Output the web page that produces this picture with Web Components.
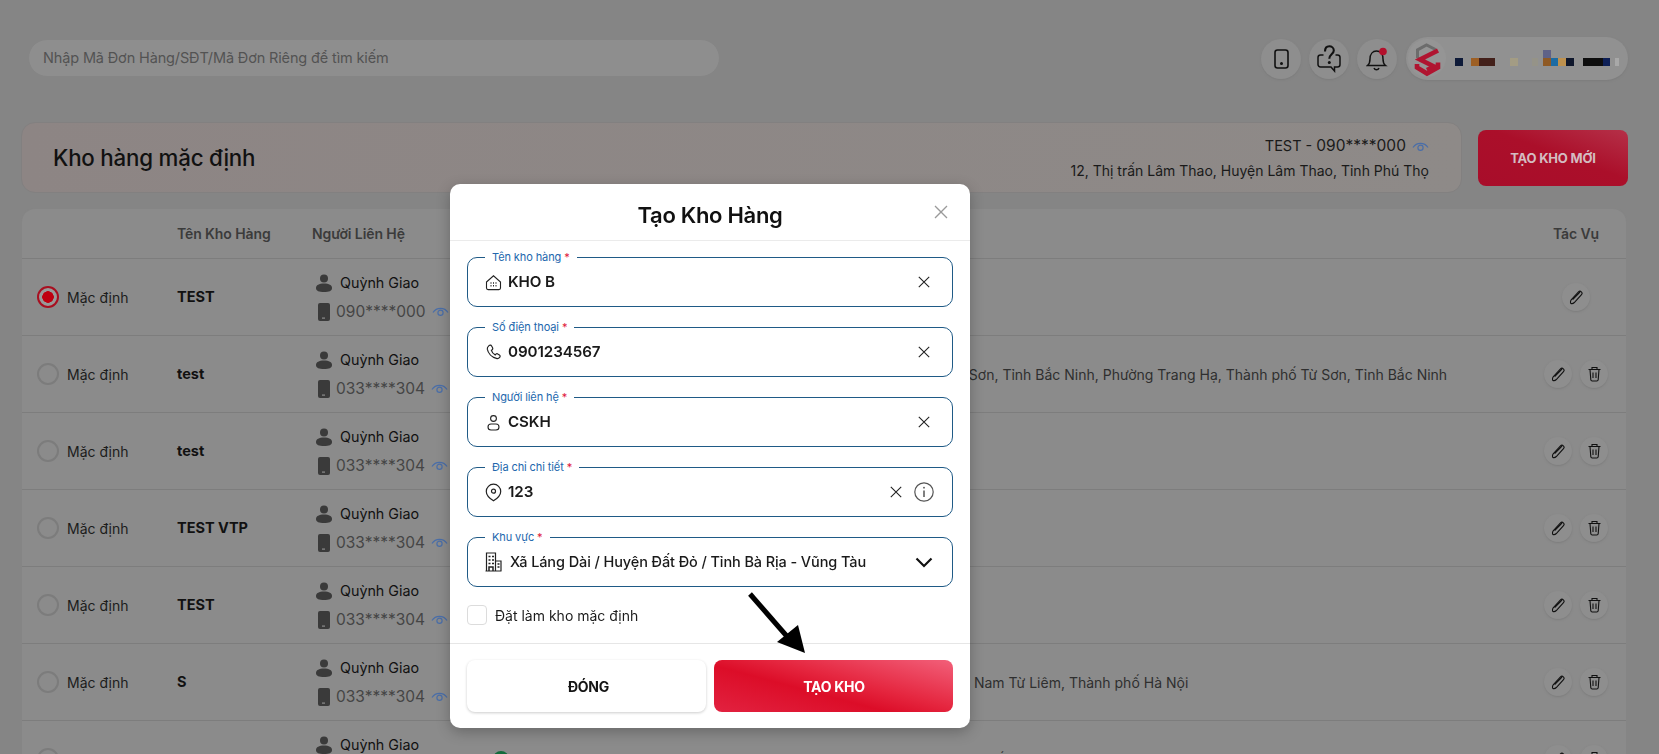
<!DOCTYPE html>
<html lang="vi">
<head>
<meta charset="utf-8">
<title>Tạo Kho Hàng</title>
<style>
  html, body { margin: 0; height: 754px; overflow: hidden; background: #858585; }
  body { font-family: Inter, "Noto Sans", sans-serif; color: #111; }
</style>
</head>
<body>
<kho-page>
  <top-bar></top-bar>
  <default-card></default-card>
  <kho-table>
    <kho-row active name="TEST" phone="090****000" address="12, Thị trấn Lâm Thao, Huyện Lâm Thao, Tỉnh Phú Thọ" single></kho-row>
    <kho-row name="test" phone="033****304" address="Phường Trang Hạ, Thành phố Từ Sơn, Tỉnh Bắc Ninh, Thành phố, Từ Sơn, Tỉnh Bắc Ninh, Phường Trang Hạ, Thành phố Từ Sơn, Tỉnh Bắc Ninh"></kho-row>
    <kho-row name="test" phone="033****304" address="Phường Trang Hạ, Thành phố Từ Sơn"></kho-row>
    <kho-row name="TEST VTP" phone="033****304" address="Phường Cầu Diễn, Quận Nam Từ Liêm"></kho-row>
    <kho-row name="TEST" phone="033****304" address="Phường Cầu Diễn, Quận Nam Từ Liêm"></kho-row>
    <kho-row name="S" phone="033****304" address="Số 1120, Ngõ 168, Đường Cầu Diễn, Phường Phúc Diễn, Hà Nội, Quận Nam Từ Liêm, Thành phố Hà Nội"></kho-row>
    <kho-row name="test" phone="033****304" address="33 Định Công, Bình Dân, Phường Định Công, Quận Hoàng Mai, Thành phố Hà Nội"></kho-row>
  </kho-table>
</kho-page>

<kho-modal>
  <form-field label="Tên kho hàng" value="KHO B" icon="home"></form-field>
  <form-field label="Số điện thoại" value="0901234567" icon="phone"></form-field>
  <form-field label="Người liên hệ" value="CSKH" icon="user"></form-field>
  <form-field label="Địa chỉ chi tiết" value="123" icon="pin" info></form-field>
  <form-field label="Khu vực" value="Xã Láng Dài / Huyện Đất Đỏ / Tỉnh Bà Rịa - Vũng Tàu" icon="building" select></form-field>
</kho-modal>

<script>
// icons used in more than one element
const ICONS = {
  home: `<svg width="17" height="17" viewBox="0 0 17 17" fill="none" stroke="#222" stroke-width="1.1"><path d="M1.5 8 8.5 1.8 15.5 8v6a1.6 1.6 0 0 1-1.6 1.6H3.1A1.6 1.6 0 0 1 1.5 14z"/><path d="M5.5 9h1M8 9h1M10.5 9h1M5.5 11.7h1M8 11.7h1M10.5 11.7h1" stroke-width="1.4"/></svg>`,
  phone: `<svg width="17" height="17" viewBox="0 0 17 17" fill="none" stroke="#222" stroke-width="1.2"><path d="M4 1.6c1-.7 2-.5 2.6.4l1 1.8c.4.7.2 1.4-.4 1.9l-.8.6c.6 2 1.9 3.6 3.8 4.6l.7-.7c.5-.5 1.3-.7 1.9-.3l1.6 1c.8.5 1 1.5.3 2.4-.8 1-2 1.5-3.3 1.1C6.600 13.200 3.100 9.200 2.300 5.200 2.100 3.900 3 2.400 4 1.600z"/></svg>`,
  user: `<svg width="17" height="17" viewBox="0 0 17 17" fill="none" stroke="#222" stroke-width="1.1"><circle cx="8.500" cy="4.500" r="2.900"/><rect x="3" y="10" width="11" height="6" rx="3"/></svg>`,
  pin: `<svg width="17" height="19" viewBox="0 0 17 19" fill="none" stroke="#222" stroke-width="1.2"><path d="M8.500 1.200a7.200 7.200 0 0 1 7.200 7.200c0 4-4.200 7.500-7.200 9.400-3-1.900-7.200-5.400-7.200-9.400a7.200 7.200 0 0 1 7.200-7.200z"/><circle cx="8.500" cy="8.200" r="2"/></svg>`,
  building: `<svg width="17" height="20" viewBox="0 0 17 20" fill="none" stroke="#222" stroke-width="1.200"><path d="M1.500 19V1h9v18M10.500 9h5.500v10M.5 19h16"/><path d="M3.500 4.500h2M7 4.500h2M3.500 8h2M7 8h2M3.500 11.500h2M7 11.500h2M12.500 12h2M12.500 15h2M4 19v-4h4v4" stroke-width="1.500"/></svg>`,
  x: `<svg width="12" height="12" viewBox="0 0 12 12" fill="none" stroke="#222" stroke-width="1.100"><path d="M.8.800l10.400 10.400M11.200.800.800 11.200"/></svg>`,
  eye: `<svg width="17" height="11" viewBox="0 0 17 11" fill="none" stroke="#4a6ea8" stroke-width="1.200"><path d="M1 6.500C4.500 1 12.500 1 16 6.500"/><circle cx="8.500" cy="6.800" r="2.600"/></svg>`,
  pen: `<svg width="15" height="15" viewBox="0 0 15 15" fill="none" stroke="#111" stroke-width="1.100"><path d="M1.800 13.400c-.5-1.200-.3-2.600.4-3.600L9.500 1.900c.8-.8 2-.8 2.800-.1.900.8 1 2 .2 2.900L5.300 12.500c-1 1-2.300 1.300-3.500.9z"/><path d="M3.600 9.500 11 2"/></svg>`,
  trash: `<svg width="15" height="16" viewBox="0 0 15 16" fill="none" stroke="#111" stroke-width="1.100"><path d="M1.500 3.500h12M5 3.500V1.500h5v2M3 3.500l.8 10.200c.1.800.6 1.300 1.400 1.300h4.600c.8 0 1.300-.5 1.400-1.300L12 3.500M6 6.500v5.500M9 6.500v5.500"/></svg>`
};

class KhoPage extends HTMLElement {
  constructor() {
    super();
    this.attachShadow({ mode: "open" }).innerHTML = `
      <style>
        :host { display: flex; flex-direction: column; height: 754px; padding: 37px 31px 0 21px; box-sizing: border-box; overflow: hidden; }
      </style>
      <slot></slot>`;
  }
}

class TopBar extends HTMLElement {
  constructor() {
    super();
    this.attachShadow({ mode: "open" }).innerHTML = `
      <style>
        :host { display: flex; align-items: center; height: 43px; flex: none; margin-bottom: 42px; padding-left: 7px; }
        .search { width: 692px; height: 38px; margin-top: -2px; box-sizing: border-box; padding-left: 14px; display: flex; align-items: center;
          background: #8e8e8e; border: 1px solid #858585; border-radius: 19px; font-size: 14.500px; color: #535353; letter-spacing: -.14px; }
        .right { margin-left: auto; display: flex; align-items: center; }
        .circle { width: 40px; height: 40px; border-radius: 50%; background: #8e8e8e; box-shadow: 0 1px 2px #7c7c7c; display: flex; align-items: center; justify-content: center; margin-right: 8px; }
        .pill { width: 222px; height: 43px; margin-left: 1px; border-radius: 22px; background: #919191; box-shadow: 0 1px 2px #7c7c7c; display: flex; align-items: center; }
        .pill svg { display: block; }
      </style>
      <div class="search">Nhập Mã Đơn Hàng/SĐT/Mã Đơn Riêng để tìm kiếm</div>
      <div class="right">
        <div class="circle"><svg width="15" height="20" viewBox="0 0 15 20" fill="none" stroke="#111" stroke-width="1.600"><rect x="1" y="1" width="13" height="18" rx="2.500"/><circle cx="7.500" cy="14.500" r=".7" fill="#111"/></svg></div>
        <div class="circle"><svg width="24" height="28" viewBox="0 0 24 28" fill="none" stroke="#111" stroke-width="1.500"><path d="M6.500 10H3.500A2.500 2.500 0 0 0 1 12.500v7A2.500 2.500 0 0 0 3.500 22H14l3.500 4v-4h3A2.500 2.500 0 0 0 23 19.500v-7A2.500 2.500 0 0 0 20.500 10h-2"/><path d="M8 6.500C8 3 10 1.200 12.300 1.200S16.800 3 16.800 5.500c0 3.500-4.500 3.500-4.500 8.300" stroke-width="2.100"/><circle cx="12.300" cy="17.500" r="1.500" fill="#111" stroke="none"/></svg></div>
        <div class="circle"><svg width="22" height="24" viewBox="0 0 22 24" fill="none" stroke="#111" stroke-width="1.500"><path d="M1.500 18.500c2-1.500 2.500-3 2.500-6.500 0-5 2.800-8 6.500-8 3.800 0 6.500 3 6.500 8 0 3.500.500 5 2.500 6.500z"/><path d="M8 21c.5 1.200 1.300 1.800 2.500 1.800S12.500 22.200 13 21"/><circle cx="17" cy="4.500" r="3.800" fill="#b3102c" stroke="none"/></svg></div>
        <div class="pill">
          <svg width="222" height="43" viewBox="0 0 222 43">
            <circle cx="21" cy="21" r="19" fill="#959595"/>
            <path d="M11.500 21v-8l9-5 9 4.500" fill="none" stroke="#6c6c6c" stroke-width="3"/>
            <path d="M32 13.500 14 22.500 28 29.500 21 33M11 27v3.500l10 6 11-6v-5" fill="none" stroke="#b01430" stroke-width="4.600"/>
            <rect x="49" y="21" width="8" height="8" fill="#0e1a38"/>
            <rect x="65" y="21" width="8" height="8" fill="#9d5f24"/><rect x="73" y="21" width="16" height="8" fill="#43201a"/>
            <rect x="104" y="21" width="8" height="8" fill="#a39c84"/><rect x="126" y="21" width="6" height="8" fill="#959388"/>
            <rect x="137" y="13" width="8" height="8" fill="#5f6288"/><rect x="137" y="21" width="8" height="8" fill="#8f5a25"/>
            <rect x="145" y="21" width="7" height="8" fill="#1c6ba3"/><rect x="152" y="21" width="8" height="8" fill="#bd914f"/>
            <rect x="160" y="21" width="8" height="8" fill="#0f172c"/><rect x="177" y="21" width="20" height="8" fill="#0e0e0e"/>
            <rect x="197" y="21" width="7" height="8" fill="#0d1f56"/><rect x="209" y="21" width="4" height="8" fill="#a8a8a8"/>
          </svg>
        </div>
      </div>`;
  }
}

class DefaultCard extends HTMLElement {
  constructor() {
    super();
    this.attachShadow({ mode: "open" }).innerHTML = `
      <style>
        :host { display: flex; flex: none; align-items: center; gap: 16px; margin-bottom: 15px; }
        .card { flex: 1; height: 71px; box-sizing: border-box; display: flex; align-items: center; justify-content: space-between;
          padding: 0 32px 0 31px; border-radius: 14px; border: 1px solid #828080; background: linear-gradient(90deg, #8d8584, #8e8a88); }
        h2 { margin: 0; font-size: 22.300px; font-weight: 500; color: #111; letter-spacing: -.2px; }
        .info { text-align: right; font-size: 14px; color: #1a1a1a; line-height: 25px; padding-top: 1px; }
        .info svg { margin-left: 2px; vertical-align: -1px; }
        .top { font-size: 14.500px; }
        .phone { font-size: 15.500px; }
        button { width: 150px; height: 56px; border: 0; border-radius: 8px; font: 700 13px Inter, sans-serif; letter-spacing: -.2px; color: #d4bcc1;
          background: linear-gradient(200deg, #b53048 0%, #ab0f2a 45%, #a80d2a 100%); }
      </style>
      <div class="card">
        <h2>Kho hàng mặc định</h2>
        <div class="info">
          <div class="top">TEST - <span class="phone">090****000</span> ${ICONS.eye}</div>
          <div>12, Thị trấn Lâm Thao, Huyện Lâm Thao, Tỉnh Phú Thọ</div>
        </div>
      </div>
      <button>TẠO KHO MỚI</button>`;
  }
}

class KhoTable extends HTMLElement {
  constructor() {
    super();
    this.attachShadow({ mode: "open" }).innerHTML = `
      <style>
        :host { display: block; flex: none; background: #8b8b8b; border: 1px solid #858585; border-bottom: 0; border-radius: 14px 14px 0 0; width: 1606px; box-sizing: border-box; }
        .head { height: 49px; display: grid; grid-template-columns: 155px 135px 1fr 73px; align-items: center; font-size: 14px; font-weight: 600; color: #3b3b3b; letter-spacing: -.1px; }
      </style>
      <div class="head"><span></span><span>Tên Kho Hàng</span><span>Người Liên Hệ</span><span>Tác Vụ</span></div>
      <slot></slot>`;
  }
}

class KhoRow extends HTMLElement {
  constructor() {
    super();
    const a = (n) => this.getAttribute(n) || "";
    const radio = this.hasAttribute("active") ? `<i class="radio on"></i>` : `<i class="radio"></i>`;
    const actions = this.hasAttribute("single")
      ? `<span class="act one">${ICONS.pen}</span>`
      : `<span class="act">${ICONS.pen}</span><span class="act">${ICONS.trash}</span>`;
    this.attachShadow({ mode: "open" }).innerHTML = `
      <style>
        :host { display: grid; grid-template-columns: 155px 135px 181px minmax(0, 1fr) 88px; align-items: center; height: 77px; box-sizing: border-box; border-top: 1px solid #7d7d7d; font-size: 14px; color: #1c1c1c; }
        .check { display: flex; align-items: center; gap: 8px; padding-left: 15px; }
        .radio { width: 22px; height: 22px; box-sizing: border-box; border-radius: 50%; border: 2px solid #7c7c7c; display: block; position: relative; }
        .radio.on { border-color: #a80f20; background: radial-gradient(circle, #bf0010 0 5.500px, #999 6px); }
        b { font-weight: 700; color: #111; font-size: 14.500px; margin-top: -2px; }
        .contact { display: flex; flex-direction: column; gap: 7px; }
        .contact div { display: flex; align-items: center; height: 22px; white-space: nowrap; }
        .name { color: #111; padding-left: 4px; gap: 8px; font-size: 14.300px; }
        .tel { padding-left: 6px; gap: 6px; font-size: 15.500px; color: #454545; }
        .addr { display: flex; align-items: center; gap: 8px; white-space: nowrap; color: #2f2f2f; font-size: 14px; }
        .dot { width: 16px; height: 16px; border-radius: 50%; background: #146b3c; flex: none; }
        .acts { display: flex; gap: 8px; justify-content: center; padding-right: 12px; }
        .act { width: 28px; height: 28px; border-radius: 50%; background: #8e8e8e; box-shadow: 0 1px 2px #7d7d7d; display: flex; align-items: center; justify-content: center; }
      </style>
      <div class="check">${radio}<span>Mặc định</span></div>
      <b>${a("name")}</b>
      <div class="contact">
        <div class="name"><svg width="16" height="18" viewBox="0 0 16 18" fill="#3a3a3a"><circle cx="8" cy="4.500" r="4"/><path d="M0 14c0-3 3-4.500 8-4.500s8 1.500 8 4.500-3 4-8 4-8-1-8-4z"/></svg>Quỳnh Giao</div>
        <div class="tel"><svg width="12" height="18" viewBox="0 0 12 18" fill="#3a3a3a"><rect width="12" height="18" rx="2"/><rect x="4" y="14.500" width="3" height="1.200" fill="#8b8b8b"/></svg><span>${a("phone")}</span>${ICONS.eye}</div>
      </div>
      <div class="addr"><i class="dot"></i><span>${a("address")}</span></div>
      <div class="acts">${actions}</div>`;
  }
}

class FormField extends HTMLElement {
  constructor() {
    super();
    const a = (n) => this.getAttribute(n) || "";
    const right = this.hasAttribute("select")
      ? `<svg width="18" height="11" viewBox="0 0 18 11" fill="none" stroke="#111" stroke-width="2.200"><path d="M1.500 1.500 9 9l7.500-7.500"/></svg>`
      : ICONS.x;
    const info = this.hasAttribute("info")
      ? `<svg width="20" height="20" viewBox="0 0 20 20" fill="none" stroke="#555" stroke-width="1.200"><circle cx="10" cy="10" r="9.200"/><path d="M10 8.500V15" stroke-width="1.500"/><circle cx="10" cy="5.700" r=".9" fill="#555" stroke="none"/></svg>` : "";
    this.attachShadow({ mode: "open" }).innerHTML = `
      <style>
        :host { display: flex; align-items: center; position: relative; height: 50px; box-sizing: border-box; border: 1.200px solid #1f5a86; border-radius: 10px; padding-left: 17px; }
        label { position: absolute; top: -8px; left: 17px; padding: 0 7px; background: #fff; font-size: 11px; line-height: 14px; color: #2267ad; letter-spacing: -.1px; }
        label em { color: #e0173a; font-style: normal; }
        .val { margin-left: 6px; margin-top: -1px; font-size: 15.200px; font-weight: 600; letter-spacing: -.1px; color: #1a1a1a; flex: 1; white-space: nowrap; }
        :host([select]) .val { font-size: 14.500px; font-weight: 500; margin-left: 8px; letter-spacing: -.1px; }
        .end { display: flex; align-items: center; justify-content: flex-end; gap: 12px; padding-right: 22px; flex: none; }
        :host([info]) .end { padding-right: 18px; }
        :host([select]) .end { padding-right: 19px; }
        svg { display: block; flex: none; }
      </style>
      <label>${a("label")} <em>*</em></label>
      ${ICONS[a("icon")]}
      <span class="val">${a("value")}</span>
      <div class="end">${right}${info}</div>`;
  }
}

class KhoModal extends HTMLElement {
  constructor() {
    super();
    this.attachShadow({ mode: "open" }).innerHTML = `
      <style>
        /* dialog sits above the page */
        :host { position: fixed; left: 450px; top: 184px; width: 520px; background: #fff; border-radius: 10px; box-shadow: 0 4px 14px rgba(0,0,0,.25); display: flex; flex-direction: column; color: #111; }
        header { height: 56px; border-bottom: 1px solid #ebebeb; display: flex; align-items: center; justify-content: center; position: relative; font-size: 22px; font-weight: 600; letter-spacing: -.3px; }
        header span { margin-top: 5px; }
        header svg { position: absolute; right: 22px; top: 21px; }
        .body { display: flex; flex-direction: column; gap: 20px; padding: 16px 17px 0 17px; }
        .check { display: flex; align-items: center; gap: 8px; padding: 18px 0 18px 17px; font-size: 14px; color: #1c1c1c; border-bottom: 1px solid #e6e6e6; }
        .check i { width: 20px; height: 20px; box-sizing: border-box; border: 1px solid #dcdcdc; border-radius: 4px; display: block; }
        footer { display: flex; gap: 8px; padding: 16px 17px 16px 17px; }
        button { flex: 1 1 0; min-width: 0; height: 52px; border: 0; padding: 0; border-radius: 8px; font: 700 14px Inter, sans-serif; letter-spacing: -.25px; }
        .close { background: #fff; color: #151515; box-shadow: 0 1px 3px rgba(0,0,0,.2); text-indent: 4px; }
        .ok { color: #fff; text-indent: 1px; background: linear-gradient(195deg, #f2607a 0%, #e5263f 42%, #dc0d28 60%, #e22240 100%); }
        .arrow { position: absolute; left: 0; top: 0; pointer-events: none; }
      </style>
      <header><span>Tạo Kho Hàng</span>
        <svg width="14" height="14" viewBox="0 0 14 14" fill="none" stroke="#9a9a9a" stroke-width="1.300"><path d="M1 1l12 12M13 1 1 13"/></svg>
      </header>
      <div class="body"><slot></slot></div>
      <div class="check"><i></i><span>Đặt làm kho mặc định</span></div>
      <footer><button class="close">ĐÓNG</button><button class="ok">TẠO KHO</button></footer>
      <svg class="arrow" width="520" height="543" viewBox="0 0 520 543">
        <path d="M300 410 341 457" stroke="#000" stroke-width="5" fill="none"/>
        <path d="M327 458 348 441 355 469z" fill="#000"/>
      </svg>`;
  }
}

customElements.define("kho-page", KhoPage);
customElements.define("top-bar", TopBar);
customElements.define("default-card", DefaultCard);
customElements.define("kho-table", KhoTable);
customElements.define("kho-row", KhoRow);
customElements.define("form-field", FormField);
customElements.define("kho-modal", KhoModal);
</script>
</body>
</html>
